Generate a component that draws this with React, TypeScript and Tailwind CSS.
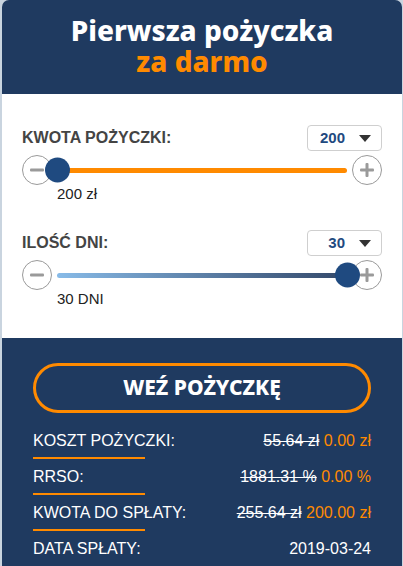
import * as React from "react";

/** Circular +/- step button next to a slider */
function StepButton({ kind }: { kind: "minus" | "plus" }) {
  return (
    <div className="flex h-[30px] w-[30px] shrink-0 items-center justify-center rounded-full border border-[#9a9a9a] bg-white">
      <svg width="18" height="18" viewBox="0 0 18 18">
        <rect x="2" y="7.5" width="14" height="3" rx="1" fill="#9a9a9a" />
        {kind === "plus" && <rect x="7.5" y="2" width="3" height="14" rx="1" fill="#9a9a9a" />}
      </svg>
    </div>
  );
}

function Select({ value }: { value: string }) {
  return (
    <div className="flex h-[26px] w-[75px] items-center justify-end gap-[14px] rounded-[4px] border border-[#cfcfcf] pr-[10px]">
      <span className="text-[15px] font-bold text-[#1f4a80]">{value}</span>
      <svg width="12" height="7" viewBox="0 0 12 7">
        <path d="M0 0h12L6 7z" fill="#333" />
      </svg>
    </div>
  );
}

interface SliderProps {
  label: string;
  value: string;
  caption: string;
  atEnd?: boolean;
  trackClass: string;
}

function SliderBlock({ label, value, caption, atEnd, trackClass }: SliderProps) {
  return (
    <div>
      <div className="flex items-center justify-between">
        <span className="text-[16px] font-bold text-[#444]">{label}</span>
        <Select value={value} />
      </div>
      <div className="relative mt-[4px] flex items-center">
        <StepButton kind="minus" />
        <div className="relative mx-[5px] h-[5px] flex-1">
          <div className={`h-full rounded-full ${trackClass}`} />
        </div>
        <StepButton kind="plus" />
        <div
          className={`absolute top-1/2 h-[25px] w-[25px] -translate-y-1/2 rounded-full bg-[#1f4a80] ${
            atEnd ? "left-[313px]" : "left-[23px]"
          }`}
        />
      </div>
      <div className="ml-[35px] -mt-[1px] text-[15px] leading-[20px] text-[#222]">{caption}</div>
    </div>
  );
}

function SummaryRow({
  label,
  old,
  current,
  underline = true,
}: {
  label: string;
  old?: string;
  current: string;
  underline?: boolean;
}) {
  return (
    <div className="h-[36px]">
      <div className="flex items-center justify-between text-[16px] leading-[20px]">
        <span className="text-white">{label}</span>
        <span>
          {old && <span className="text-white line-through">{old}</span>}
          {old ? <span className="text-[#ff8a00]"> {current}</span> : <span className="text-white">{current}</span>}
        </span>
      </div>
      {underline && <div className="mt-[6px] h-[2px] w-[112px] bg-[#ff8a00]" />}
    </div>
  );
}

export default function App() {
  return (
    <div className="h-[566px] w-[403px] overflow-hidden bg-[#c9d4df] font-['Liberation_Sans',Arial,sans-serif]">
      <div className="ml-[2px] w-[400px]">
        {/* header */}
        <div className="flex h-[94px] flex-col items-center rounded-t-[7px] bg-[#1f3a60] pt-[15px] font-['Noto_Sans',sans-serif] text-[28px] font-extrabold leading-[31px]">
          <span className="text-white">Pierwsza pożyczka</span>
          <span className="text-[#ff8a00]">za darmo</span>
        </div>

        {/* calculator */}
        <div className="flex h-[244px] flex-col gap-[26px] bg-white px-[20px] pt-[31px]">
          <SliderBlock label="KWOTA POŻYCZKI:" value="200" caption="200 zł" trackClass="bg-[#ff8a00]" />
          <SliderBlock
            label="ILOŚĆ DNI:"
            value="30"
            caption="30 DNI"
            atEnd
            trackClass="bg-gradient-to-r from-[#88bbe8] to-[#34496a]"
          />
        </div>

        {/* summary */}
        <div className="h-[228px] bg-[#1f3a60] px-[31px] pt-[25px]">
          <div className="flex h-[50px] items-center justify-center rounded-full border-[3px] border-[#ff8a00] font-['Noto_Sans',sans-serif] text-[21px] font-extrabold text-white">
            WEŹ POŻYCZKĘ
          </div>
          <div className="mt-[18px]">
            <SummaryRow label="KOSZT POŻYCZKI:" old="55.64 zł" current="0.00 zł" />
            <SummaryRow label="RRSO:" old="1881.31 %" current="0.00 %" />
            <SummaryRow label="KWOTA DO SPŁATY:" old="255.64 zł" current="200.00 zł" />
            <SummaryRow label="DATA SPŁATY:" current="2019-03-24" underline={false} />
          </div>
        </div>
      </div>
    </div>
  );
}
